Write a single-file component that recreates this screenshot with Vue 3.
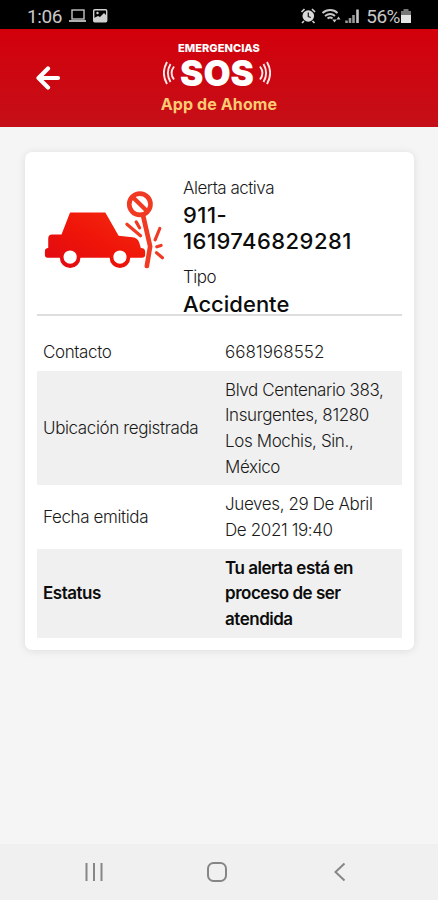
<template>
  <div class="screen">
    <!-- Barra de estado -->
    <div class="status-bar">
      <span class="clock">1:06</span>
      <svg class="left-icons" viewBox="0 0 42 16" width="42" height="16" fill="none">
        <rect x="4" y="2" width="12" height="9" stroke="#c4c4c4" stroke-width="1.4" />
        <path d="M1 13h17" stroke="#c4c4c4" stroke-width="1.8" />
        <rect x="25.700" y="1.700" width="13" height="12" rx="1" stroke="#d0d0d0" stroke-width="1.4" />
        <path d="M26 13v-3l4-2 2 1 4-4 3 3v5z" fill="#d0d0d0" />
        <circle cx="29.500" cy="5" r="1.200" fill="#d0d0d0" />
      </svg>
      <svg class="right-icons" viewBox="0 0 62 18" width="62" height="18" fill="none">
        <circle cx="8.300" cy="9" r="5.800" fill="#d8d8d8" />
        <path d="M1.500 5l3-3M15 5l-3-3M4 14l-2 2M12.500 14l2 2" stroke="#d0d0d0" stroke-width="1.700" />
        <path d="M8.300 5.500v4l2.500 1" stroke="#222" stroke-width="1.300" />
        <path d="M22.500 6c4.500-4 11-4 15 0M25 9c3.500-2.500 7-2.500 10 0M27.500 11.500c2-1.300 3.500-1.300 5 0" stroke="#c8c8c8" stroke-width="1.900" />
        <path d="M34.500 15.500l-2.200-3h4.400zM38.500 9.500l2 3h-4z" fill="#c8c8c8" />
        <path d="M46.500 16v-2.500M50 16v-5M53.500 16V8" stroke="#989898" stroke-width="2.600" />
        <path d="M57.500 16V2.500" stroke="#c4c4c4" stroke-width="2.600" />
      </svg>
      <span class="percent">56%</span>
      <svg class="battery" viewBox="0 0 12 16" width="12" height="16">
        <path d="M3.500 1h5v2h2.500v4H1V3h2.500z" fill="#777" />
        <path d="M1 7h10v8H1z" fill="#e4e4e4" />
      </svg>
    </div>

    <!-- Encabezado -->
    <header class="header">
      <button class="back" aria-label="Regresar">
        <svg viewBox="0 0 26 24" width="26" height="24" fill="none">
          <path d="M23 12H4M13 2.500L3.500 12l9.500 9.500" stroke="#fff" stroke-width="4.200" stroke-linecap="round" stroke-linejoin="round" />
        </svg>
      </button>
      <div class="brand">
        <span class="brand-top">EMERGENCIAS</span>
        <div class="brand-sos">
          <svg v-for="side in ['left', 'right']" :key="side" :class="['waves', side]" viewBox="0 0 12 24" width="12" height="24" fill="none" stroke="#ffe9e9">
            <path d="M4 1C0 8 0 16 4 23" stroke-width="1.900" />
            <path d="M7.500 3C4 9 4 15 7.500 21" stroke-width="1.900" />
            <path d="M11 5.500c-3 4-3 9 0 13" stroke-width="1.900" />
          </svg>
          <span class="sos">SOS</span>
        </div>
        <span class="brand-app">App de Ahome</span>
      </div>
    </header>

    <main class="content">
      <section class="card">
        <div class="summary">
          <svg class="crash" viewBox="60 130 390 250" width="130" height="83" fill="none">
            <defs>
              <linearGradient id="red" x1="0" y1="1" x2="1" y2="0">
                <stop offset="0" stop-color="#df0812" />
                <stop offset="0.5" stop-color="#ef1509" />
                <stop offset="1" stop-color="#f52c12" />
              </linearGradient>
            </defs>
            <path
              d="M152 204H256L296 274L338 278Q354 280 358 294L363 311Q376 311 376 323V330Q376 340 366 340H331A31 31 0 0 1 269 340H181A31 31 0 0 1 119 340H82Q74 340 74 331V320Q74 312 84 311V282Q84 270 96 270H124L148 208Q149 204 152 204Z"
              fill="url(#red)"
            />
            <circle cx="150" cy="338" r="20" fill="#fff" />
            <circle cx="300" cy="338" r="20" fill="#fff" />
            <g stroke="#f03a23" stroke-linecap="round">
              <circle cx="360" cy="179" r="32" stroke-width="14" />
              <path d="M339 158L382 200" stroke-width="13" />
              <path d="M370 214L391 306L381 365" stroke-width="14" stroke-linejoin="round" />
              <path d="M321 239L362 274M349 232L359 250M420 252L406 286M411 307L424 303M410 325L428 340" stroke-width="9.500" />
            </g>
          </svg>
          <div class="info">
            <p class="caption">Alerta activa</p>
            <p class="folio">911-<br />1619746829281</p>
            <p class="caption tipo">Tipo</p>
            <p class="kind">Accidente</p>
          </div>
        </div>

        <div class="details">
          <div v-for="row in rows" :key="row.label" class="row" :class="{ bold: row.bold, phone: row.phone }">
            <div class="label">{{ row.label }}</div>
            <div class="value">
              <span v-for="line in row.lines" :key="line" class="line">{{ line }}</span>
            </div>
          </div>
        </div>
      </section>
    </main>

    <!-- Navegación del sistema -->
    <nav class="nav-bar">
      <svg viewBox="0 0 24 24" width="24" height="24" fill="none" stroke="#868686" stroke-width="2">
        <path d="M4.500 3v18M12 3v18M19.500 3v18" />
      </svg>
      <svg viewBox="0 0 24 24" width="24" height="24" fill="none" stroke="#868686" stroke-width="2">
        <rect x="3" y="3" width="18" height="18" rx="5.500" />
      </svg>
      <svg viewBox="0 0 24 24" width="24" height="24" fill="none" stroke="#868686" stroke-width="2">
        <path d="M16.500 3.500L7.500 12l9 8.500" />
      </svg>
    </nav>
  </div>
</template>

<script setup>
const rows = [
  { label: 'Contacto', lines: ['6681968552'], phone: true },
  {
    label: 'Ubicación registrada',
    lines: ['Blvd Centenario 383,', 'Insurgentes, 81280', 'Los Mochis, Sin.,', 'México'],
  },
  { label: 'Fecha emitida', lines: ['Jueves, 29 De Abril', 'De 2021 19:40'] },
  {
    label: 'Estatus',
    lines: ['Tu alerta está en', 'proceso de ser', 'atendida'],
    bold: true,
  },
];
</script>

<style>
body {
  margin: 0;
}
</style>

<style scoped>
.screen {
  display: flex;
  flex-direction: column;
  width: 438px;
  height: 900px;
  overflow: hidden;
  background: #f5f5f5;
  font-family: Inter, 'Liberation Sans', sans-serif;
  color: #1a1a1a;
}

.status-bar {
  display: flex;
  align-items: center;
  box-sizing: border-box;
  height: 29px;
  padding: 3px 26px 0 27px;
  background: #000;
  color: #c8c8c8;
  font-family: Roboto, sans-serif;
  font-size: 19px;
}

.clock {
  letter-spacing: -0.4px;
}

.left-icons {
  margin-left: 6px;
}

.right-icons {
  margin-left: auto;
}

.percent {
  margin-left: 4px;
  letter-spacing: -0.5px;
}

.header {
  position: relative;
  display: flex;
  justify-content: center;
  height: 98px;
  background: linear-gradient(#d3000b, #c50f18);
}

.back {
  position: absolute;
  left: 35px;
  top: 37px;
  padding: 0;
  border: none;
  background: none;
  line-height: 0;
}

.brand {
  display: flex;
  flex-direction: column;
  align-items: center;
  padding-top: 13px;
  color: #fff;
}

.brand-top {
  font-size: 11px;
  line-height: 13px;
  font-weight: 800;
  letter-spacing: 0.05px;
}

.brand-sos {
  display: flex;
  align-items: center;
  justify-content: center;
  gap: 5px;
  height: 36px;
  margin-right: 4px;
}

.sos {
  order: 1;
  font-size: 35px;
  line-height: 36px;
  font-weight: 900;
}

.waves.right {
  order: 2;
  transform: scaleX(-1);
}

.brand-app {
  margin-top: 3px;
  color: #fccb74;
  font-size: 16px;
  line-height: 20px;
  font-weight: 700;
  letter-spacing: 0.1px;
}

.content {
  flex: 1;
  padding: 25px 24px 0 25px;
}

.card {
  box-sizing: border-box;
  height: 498px;
  padding: 0 12px;
  border-radius: 7px;
  background: #fff;
  box-shadow: 0 1px 8px rgba(0, 0, 0, 0.1);
}

.summary {
  display: flex;
  box-sizing: border-box;
  height: 164px;
  padding-top: 24px;
  border-bottom: 2px solid #dedede;
}

.crash {
  flex: none;
  margin: 12px 13px 0 3px;
}

p {
  margin: 0;
}

.caption {
  font-size: 17px;
  line-height: 25px;
  font-weight: 300;
  letter-spacing: -0.5px;
}

.folio,
.kind {
  color: #0c0c0c;
  font-size: 22px;
  line-height: 25.5px;
  font-weight: 500;
}

.folio {
  margin-top: 2px;
  letter-spacing: 0.45px;
}

.tipo {
  margin-top: 11px;
}

.kind {
  margin-top: 1.5px;
}

.details {
  padding-top: 17px;
}

.row {
  display: flex;
  align-items: center;
  padding: 7px 0 5.2px 6px;
  font-size: 17px;
  line-height: 25.6px;
  font-weight: 300;
  letter-spacing: -0.38px;
}

.row:nth-child(even) {
  background: #f0f0f0;
}

.label {
  width: 182px;
}

.line {
  display: block;
  white-space: nowrap;
}

.row.phone .value {
  letter-spacing: 0.05px;
}

.row.bold {
  color: #0c0c0c;
  font-weight: 600;
  letter-spacing: -0.48px;
}

.nav-bar {
  display: flex;
  align-items: center;
  justify-content: space-between;
  box-sizing: border-box;
  height: 56px;
  padding: 0 86px 0 82px;
  background: #f0f0f0;
}
</style>
